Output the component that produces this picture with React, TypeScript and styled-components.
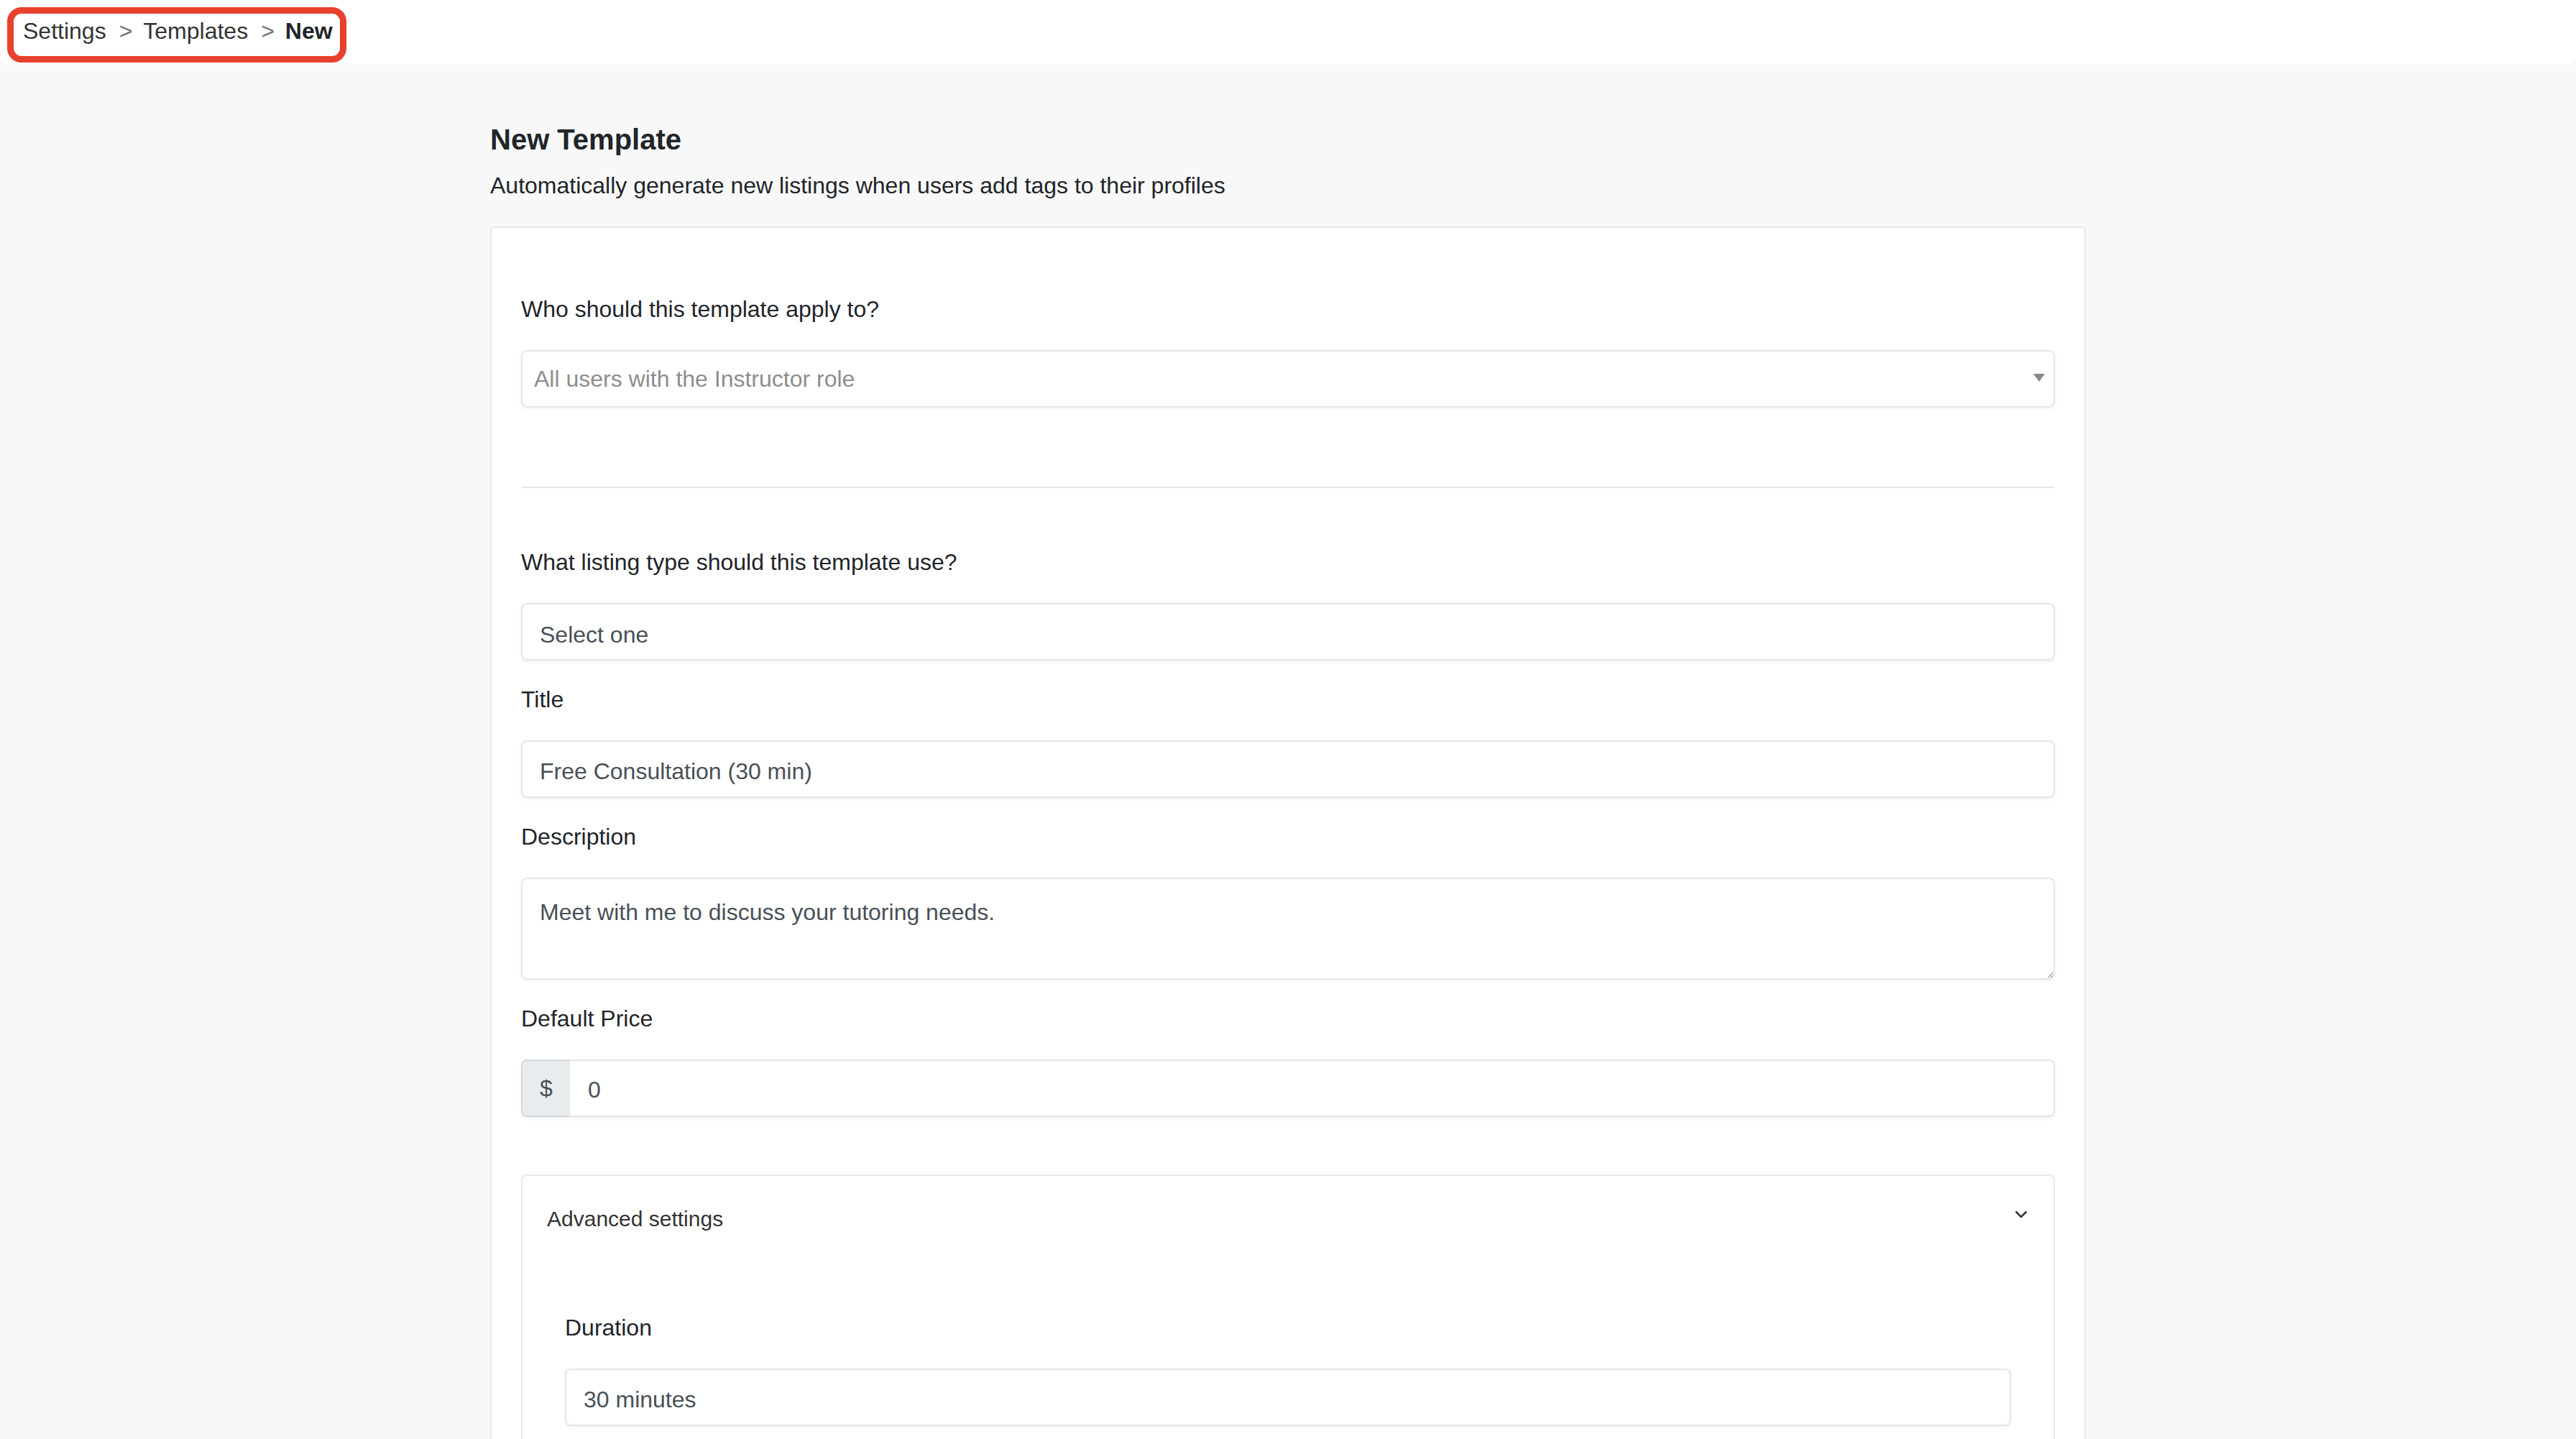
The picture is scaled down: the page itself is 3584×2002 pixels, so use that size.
import React from 'react';
import styled, { createGlobalStyle } from 'styled-components';

const GlobalStyle = createGlobalStyle`
  * { box-sizing: border-box; }
  html, body { margin: 0; padding: 0; }
  body {
    background: #f8f8f8;
    font-family: "Liberation Sans", Arial, Helvetica, sans-serif;
    font-size: 32px;
    line-height: 48px;
    color: #212529;
  }
`;

const App = () => {
  return (
    <>
      <GlobalStyle />
      <TopBar>
        <Breadcrumb>
          <Crumb>Settings</Crumb>
          <Crumb>Templates</Crumb>
          <Crumb active>New</Crumb>
        </Breadcrumb>
      </TopBar>

      <Page>
        <Title>New Template</Title>
        <Subtitle>Automatically generate new listings when users add tags to their profiles</Subtitle>

        <Card>
          <FieldLabel>Who should this template apply to?</FieldLabel>
          <SelectBox>
            <Placeholder>All users with the Instructor role</Placeholder>
            <Caret />
          </SelectBox>

          <Divider />

          <FormGroup>
            <FieldLabel>What listing type should this template use?</FieldLabel>
            <PlainSelect defaultValue="">
              <option value="">Select one</option>
            </PlainSelect>
          </FormGroup>

          <FormGroup>
            <FieldLabel>Title</FieldLabel>
            <TextInput defaultValue="Free Consultation (30 min)" />
          </FormGroup>

          <FormGroup>
            <FieldLabel>Description</FieldLabel>
            <TextArea defaultValue="Meet with me to discuss your tutoring needs." />
          </FormGroup>

          <FormGroup>
            <FieldLabel>Default Price</FieldLabel>
            <InputGroup>
              <Addon>$</Addon>
              <GroupInput defaultValue="0" />
            </InputGroup>
          </FormGroup>

          <AdvancedBox>
            <AdvancedHeader>
              <span>Advanced settings</span>
              <svg width="18" height="11" viewBox="0 0 18 11">
                <path d="M1.5 1.5 L9 9 L16.5 1.5" fill="none" stroke="#333" strokeWidth="2.6" />
              </svg>
            </AdvancedHeader>
            <AdvancedBody>
              <FieldLabel>Duration</FieldLabel>
              <TextInput defaultValue="30 minutes" />
            </AdvancedBody>
          </AdvancedBox>
        </Card>
      </Page>
    </>
  );
};

export default App;

const TopBar = styled.header`
  height: 90px;
  background: #fff;
  border-radius: 0 0 10px 10px;
  padding: 10px 0 0 10px;
`;

const Breadcrumb = styled.ol`
  display: inline-flex;
  margin: 0;
  list-style: none;
  height: 77px;
  padding: 0 10px 11px 13px;
  border: 9px solid #e8412c;
  border-radius: 20px;
`;

const Crumb = styled.li<{ active?: boolean }>`
  color: ${p => (p.active ? '#212529' : '#333')};
  font-weight: ${p => (p.active ? 700 : 400)};

  &:not(:first-child)::before {
    content: '>';
    color: #6c757d;
    padding: 0 15px 0 18px;
    font-weight: 400;
  }
`;

const Page = styled.main`
  max-width: 2220px;
  margin: 0 auto;
  padding-top: 80px;
`;

const Title = styled.h1`
  margin: 0;
  font-size: 40px;
  line-height: 48px;
  font-weight: 700;
  color: #212529;
`;

const Subtitle = styled.p`
  margin: 16px 0 33px;
`;

const Card = styled.section`
  background: #fff;
  border: 2px solid #e8e8e8;
  border-radius: 6px;
  padding: 89px 41px 80px;
`;

const FieldLabel = styled.label`
  display: block;
  margin-bottom: 33px;
  color: #212529;
`;

const FormGroup = styled.div`
  margin-bottom: 30px;
`;

const fieldBase = `
  display: block;
  width: 100%;
  height: 80px;
  background: #fff;
  border: 2px solid #e6e6e6;
  border-radius: 8px;
  box-shadow: 0 2px 4px rgba(0, 0, 0, 0.05);
  padding: 4px 24px 0;
  font-family: inherit;
  font-size: 32px;
  line-height: 48px;
  color: #495057;
  outline: none;
`;

const SelectBox = styled.div`
  ${fieldBase}
  display: flex;
  align-items: center;
  justify-content: space-between;
  padding: 0 12px 0 16px;
`;

const Placeholder = styled.span`
  color: #8d8d8d;
`;

const Caret = styled.span`
  width: 0;
  height: 0;
  border-style: solid;
  border-width: 11px 8px 0 8px;
  border-color: #888 transparent transparent transparent;
  margin-top: -4px;
`;

const Divider = styled.hr`
  margin: 110px 0 79px;
  height: 2px;
  border: 0;
  background: #e6e6e6;
`;

const PlainSelect = styled.select`
  ${fieldBase}
  padding-top: 8px;
  appearance: none;
  -webkit-appearance: none;
`;

const TextInput = styled.input`
  ${fieldBase}
  padding-top: 6px;
`;

const TextArea = styled.textarea`
  ${fieldBase}
  height: 142px;
  padding: 22px 24px;
  resize: vertical;
`;

const InputGroup = styled.div`
  display: flex;
  box-shadow: 0 2px 4px rgba(0, 0, 0, 0.05);
  border-radius: 8px;
`;

const Addon = styled.span`
  flex: 0 0 68px;
  height: 80px;
  display: flex;
  align-items: center;
  justify-content: center;
  background: #e9ecef;
  border: 2px solid #d3d8dd;
  border-right: none;
  border-radius: 8px 0 0 8px;
  color: #495057;
`;

const GroupInput = styled.input`
  ${fieldBase}
  flex: 1;
  box-shadow: none;
  border-left: none;
  border-radius: 0 8px 8px 0;
  padding-left: 25px;
`;

const AdvancedBox = styled.div`
  margin-top: 80px;
  border: 2px solid #e8e8e8;
  border-radius: 8px;
`;

const AdvancedHeader = styled.div`
  display: flex;
  justify-content: space-between;
  align-items: flex-start;
  padding: 36px 36px 0 34px;
  font-size: 30px;
  color: #333;

  svg {
    margin-top: 12px;
  }
`;

const AdvancedBody = styled.div`
  padding: 103px 59px 140px;
`;
